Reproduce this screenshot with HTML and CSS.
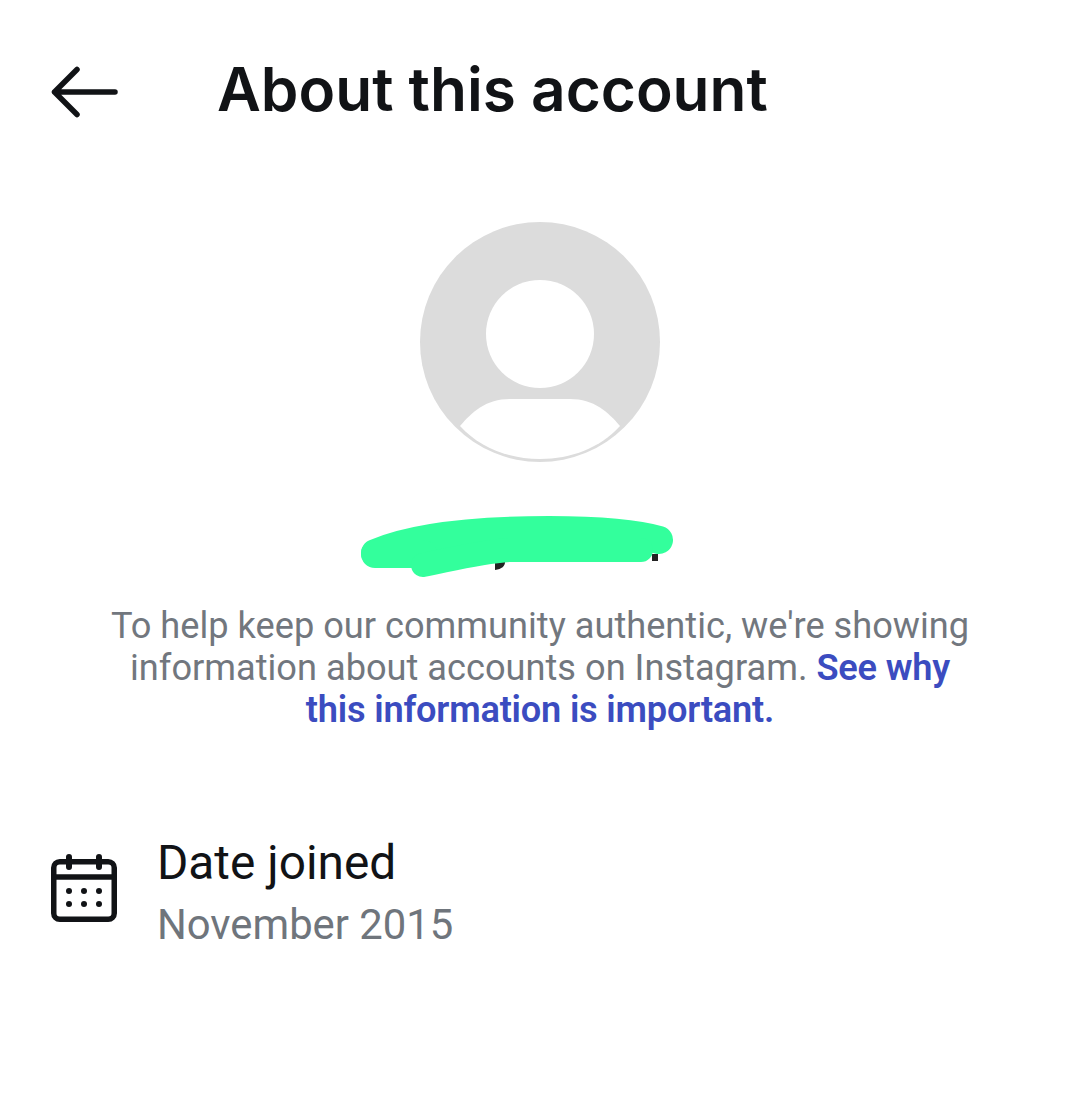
FILE: index.html
```html
<!DOCTYPE html>
<html lang="en">
<head>
<meta charset="utf-8">
<title>About this account</title>
<link rel="stylesheet" href="styles.css">
</head>
<body>
<main class="screen">
  <header class="header">
    <svg class="back" viewBox="0 0 68 52" width="68" height="52" aria-hidden="true">
      <path d="M27 3.500 4.500 26M4.500 26H65M4.500 26 27 48.500" fill="none" stroke="#111316" stroke-width="5.500" stroke-linecap="round" stroke-linejoin="round"/>
    </svg>
    <h1 class="title">About this account</h1>
  </header>
  <section class="profile">
    <svg class="avatar" viewBox="0 0 240 240" width="240" height="240" aria-hidden="true">
      <circle cx="120" cy="120" r="120" fill="#dcdcdc"/>
      <circle cx="120" cy="112" r="54" fill="#fff"/>
      <path d="M40 204C52 190 66 177 90 177h60c24 0 38 13 50 27-20 22-49 33-80 33s-60-11-80-33Z" fill="#fff"/>
    </svg>
    <div class="name">
      <svg class="scribble" viewBox="0 0 316 70" width="316" height="70" aria-hidden="true">
        <rect x="293" y="42" width="6" height="7" fill="#222"/>
        <path d="M136 50h10c0 4-3 7-10 8Z" fill="#222"/>
        <g fill="none" stroke="#33ff9c" stroke-linecap="round" stroke-linejoin="round">
          <path d="M16 41C60 22 130 18 190 18S280 22 300 28" stroke-width="28"/>
          <path d="M16 42H64" stroke-width="28"/>
          <path d="M64 53C90 48 120 40 150 38H282" stroke-width="24"/>
        </g>
      </svg>
    </div>
    <p class="intro">To help keep our community authentic, we're showing information about accounts on Instagram. <a class="link" href="#">See why this information is important.</a></p>
  </section>
  <section class="row">
    <svg class="calendar" viewBox="0 0 66 68" width="66" height="68" aria-hidden="true">
      <rect x="2.750" y="7.750" width="60.500" height="57.500" rx="6" fill="none" stroke="#111316" stroke-width="5.500"/>
      <path d="M3 23h60" stroke="#111316" stroke-width="5.500"/>
      <path d="M18 3v10M48 3v10" stroke="#111316" stroke-width="6" stroke-linecap="round"/>
      <g fill="#111316">
        <circle cx="18" cy="37" r="3"/><circle cx="33" cy="37" r="3"/><circle cx="48" cy="37" r="3"/>
        <circle cx="18" cy="50" r="3"/><circle cx="33" cy="50" r="3"/><circle cx="48" cy="50" r="3"/>
      </g>
    </svg>
    <div class="row-text">
      <div class="row-title">Date joined</div>
      <div class="row-value">November 2015</div>
    </div>
  </section>
</main>
</body>
</html>
```
FILE: styles.css
```css
* { box-sizing: border-box; }
html, body { margin: 0; background: #fff; }
.screen { width: 1080px; height: 1117px; font-family: Roboto, "Liberation Sans", sans-serif; overflow: hidden; }
.header { display: flex; align-items: center; padding: 63px 0 0 50px; height: 121px; }
.back { flex: none; display: block; }
.title { margin: -5px 0 0 99px; font-family: Inter, "Liberation Sans", sans-serif; font-size: 60.300px; line-height: 58px; font-weight: 600; color: #111316; white-space: nowrap; }
.profile { display: flex; flex-direction: column; align-items: center; padding-top: 101px; }
.avatar { display: block; }
.name { height: 70px; margin: 50px 0 0 359px; align-self: flex-start; }
.scribble { display: block; }
.intro { margin: 23px 0 0; width: 880px; text-align: center; font-size: 36.200px; line-height: 42px; color: #72777e; }
.link { color: #3b4cc0; font-weight: 600; letter-spacing: -0.2px; text-decoration: none; }
.row { display: flex; align-items: flex-start; padding: 104px 0 0 51px; }
.calendar { flex: none; display: block; margin-top: 19px; }
.row-text { margin-left: 40px; }
.row-title { font-size: 47.800px; line-height: 56px; color: #111316; }
.row-value { font-size: 41.800px; line-height: 56px; color: #6f757c; margin-top: 6px; }
```
